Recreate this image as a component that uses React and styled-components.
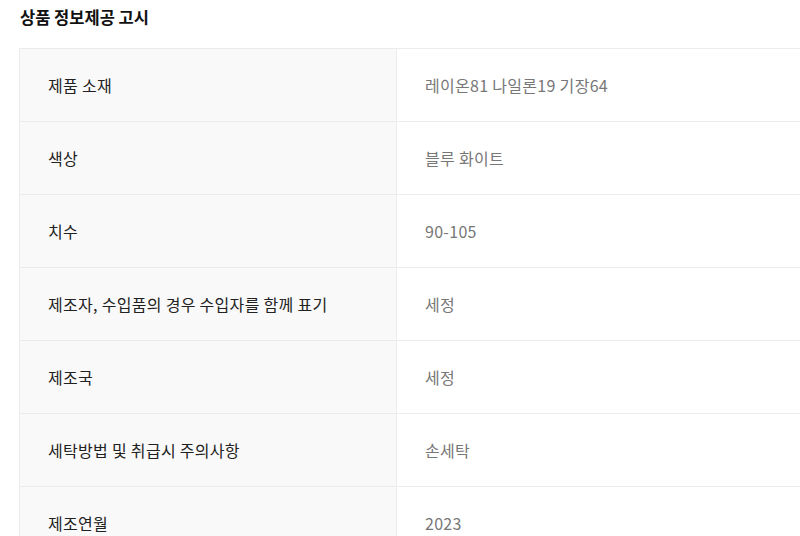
import styled, { createGlobalStyle } from 'styled-components';

const GlobalStyle = createGlobalStyle`
  html, body {
    margin: 0;
    padding: 0;
    background: #fff;
    overflow: hidden;
  }
  body {
    font-family: "Noto Sans CJK KR", "Noto Sans", sans-serif;
    -webkit-font-smoothing: antialiased;
  }
`;

const Section = styled.section`
  padding: 5px 0 0 19px;
  width: 1100px;
`;

const Title = styled.h2`
  margin: 0 0 19px 1px;
  font-size: 16.5px;
  line-height: 24px;
  font-weight: 700;
  color: #111;
`;

const InfoTable = styled.div`
  display: grid;
  grid-template-columns: 377px 1fr;
  border-top: 1px solid #ececec;
  border-left: 1px solid #ececec;
`;

const Cell = styled.div`
  padding: 24px 28px;
  font-size: 16px;
  line-height: 24px;
  letter-spacing: 0.3px;
  border-bottom: 1px solid #ececec;
  ${({ $head }) =>
    $head
      ? `
    background: #f9f9f9;
    color: #222;
    border-right: 1px solid #ececec;
  `
      : `
    background: #fff;
    color: #777;
  `}
`;

const rows = [
  ['제품 소재', '레이온81 나일론19 기장64'],
  ['색상', '블루 화이트'],
  ['치수', '90-105'],
  ['제조자, 수입품의 경우 수입자를 함께 표기', '세정'],
  ['제조국', '세정'],
  ['세탁방법 및 취급시 주의사항', '손세탁'],
  ['제조연월', '2023'],
];

export default function App() {
  return (
    <>
      <GlobalStyle />
      <Section>
        <Title>상품 정보제공 고시</Title>
        <InfoTable>
          {rows.map(([label, value]) => [
            <Cell $head key={label + 'h'}>{label}</Cell>,
            <Cell key={label + 'v'}>{value}</Cell>,
          ])}
        </InfoTable>
      </Section>
    </>
  );
}
